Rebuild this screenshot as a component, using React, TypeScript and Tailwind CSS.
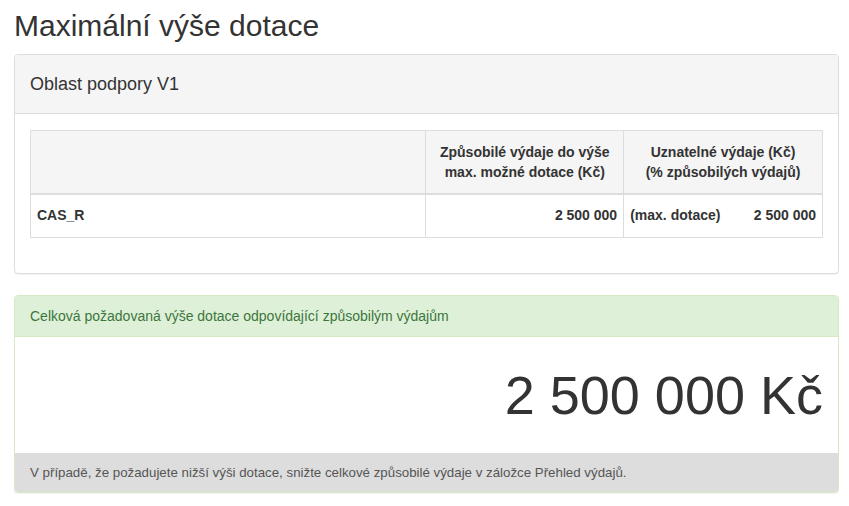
import React from 'react';

// --- Table of the support area ---
const SupportTable: React.FC = () => {
  return (
    <table className="w-[793px] border-collapse border border-[#dddddd] text-[14px] text-[#333333]">
      <colgroup>
        <col className="w-[396px]" />
        <col className="w-[198px]" />
        <col className="w-[199px]" />
      </colgroup>
      <thead>
        <tr className="h-[63px] bg-[#f5f5f5] border-b-2 border-[#dddddd]">
          <th className="border border-[#dddddd]"></th>
          <th className="border border-[#dddddd] px-2 font-bold leading-[20px] text-center">
            Způsobilé výdaje do výše
            <br />
            max. možné dotace (Kč)
          </th>
          <th className="border border-[#dddddd] px-2 font-bold leading-[20px] text-center">
            Uznatelné výdaje (Kč)
            <br />
            (% způsobilých výdajů)
          </th>
        </tr>
      </thead>
      <tbody>
        <tr className="h-[44px]">
          <td className="border border-[#dddddd] px-[6px] font-bold">CAS_R</td>
          <td className="border border-[#dddddd] px-[6px] font-bold text-right">2 500 000</td>
          <td className="border border-[#dddddd] px-[6px] font-bold">
            <div className="flex justify-between">
              <span>(max. dotace)</span>
              <span>2 500 000</span>
            </div>
          </td>
        </tr>
      </tbody>
    </table>
  );
};

const App: React.FC = () => {
  return (
    <div className="w-[849px] h-[506px] bg-white font-['Liberation_Sans',Arial,sans-serif] text-[#333333]">
      <div className="pl-[14px] pt-[9px]">
        <h2 className="text-[30px] leading-[33px] font-normal mb-[12px]">Maximální výše dotace</h2>

        {/* Panel: Oblast podpory */}
        <div className="w-[825px] bg-white border border-[#dddddd] rounded-[4px] shadow-[0_1px_1px_rgba(0,0,0,0.05)]">
          <div className="h-[59px] flex items-center px-[15px] bg-[#f5f5f5] border-b border-[#dddddd] rounded-t-[3px]">
            <span className="text-[18px]">Oblast podpory V1</span>
          </div>
          <div className="px-[15px] pt-[16px] pb-[35px]">
            <SupportTable />
          </div>
        </div>

        {/* Panel: total */}
        <div className="mt-[21px] w-[825px] bg-white border border-[#d6e9c6] rounded-[4px] shadow-[0_1px_1px_rgba(0,0,0,0.05)] overflow-hidden">
          <div className="h-[41px] flex items-center px-[15px] bg-[#dff0d8] border-b border-[#d6e9c6] text-[14px] text-[#3c763d]">
            Celková požadovaná výše dotace odpovídající způsobilým výdajům
          </div>
          <div className="h-[116px] flex items-center justify-end px-[15px]">
            <span className="text-[54px] leading-none">2 500 000 Kč</span>
          </div>
          <div className="h-[39px] flex items-center px-[15px] bg-[#dddddd] text-[13.3px] text-[#555555]">
            V případě, že požadujete nižší výši dotace, snižte celkové způsobilé výdaje v záložce Přehled výdajů.
          </div>
        </div>
      </div>
    </div>
  );
};

export default App;
